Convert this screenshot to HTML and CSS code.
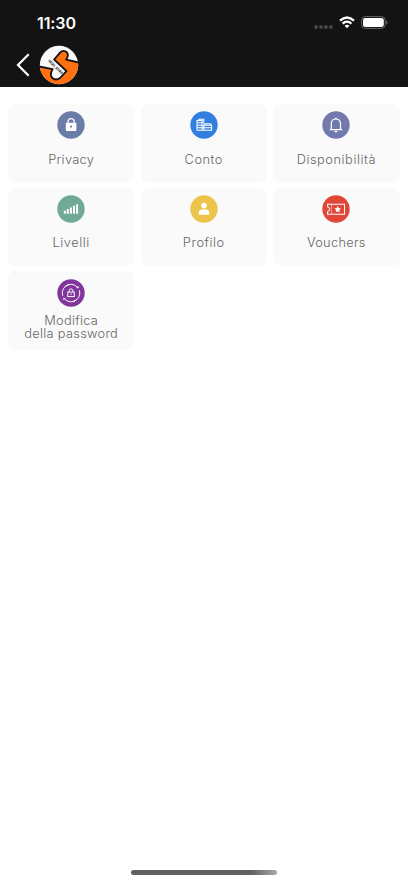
FILE: index.html
```html
<!DOCTYPE html>
<html lang="it">
<head>
<meta charset="utf-8">
<title>Impostazioni</title>
<link rel="stylesheet" href="styles.css">
</head>
<body>
<div class="screen">
  <header class="header">
    <div class="status">
      <span class="time">11:30</span>
      <div class="indicators">
        <svg class="signal" width="19" height="4" viewBox="0 0 19 4" fill="#4b4b4b"><rect x=".4" y=".3" width="3.4" height="3.4" rx="1"/><rect x="5.3" y=".3" width="3.4" height="3.4" rx="1"/><rect x="10.2" y=".3" width="3.4" height="3.4" rx="1"/><rect x="15.1" y=".3" width="3.4" height="3.4" rx="1"/></svg>
        <svg class="wifi" width="16" height="13" viewBox="0 0 16 13" fill="none" stroke="#fff" stroke-width="2.3"><path d="M1 4.7Q8-1.7 15 4.7M3.6 7.6Q8 3.6 12.4 7.6"/><path d="M5.6 9.7Q8 7.9 10.4 9.7L8 12.3Z" fill="#fff" stroke="none"/></svg>
        <svg class="battery" width="27" height="13" viewBox="0 0 27 13"><rect x=".6" y=".6" width="23.6" height="11.8" rx="3.8" fill="none" stroke="#666"/><rect x="2" y="2" width="20.8" height="9" rx="2.3" fill="#fff"/><path d="M25.2 4.3Q26.6 5 26.6 6.5T25.2 8.7Z" fill="#666"/></svg>
      </div>
    </div>
    <div class="nav">
      <svg class="back" width="14" height="24" viewBox="0 0 14 24" fill="none" stroke="#fff" stroke-width="2.2"><path d="M12.7 1.3 2 12l10.7 10.7"/></svg>
      <svg class="logo" width="40" height="40" viewBox="0 0 40 40">
        <defs><clipPath id="disc"><circle cx="20" cy="20" r="19.2"/></clipPath></defs>
        <g clip-path="url(#disc)">
          <path fill="#fafafa" d="M0 0h40v40H0z"/>
          <path fill="#ff7010" d="M0 22 13.6 24 27.5 26.2 15.1 14.5 21.3 7.3Q24.6 4.6 27.7 7.2 30.3 10 27.2 14.6L40 17.5V40H0Z"/>
          <path fill="#fafafa" d="M15.1 14.5 27.5 26.2 21 33Q17 36 13.4 33 10.2 29.8 13.6 24.2L6 22.5Z"/>
          <path fill="none" stroke="#141010" stroke-width="1.8" stroke-linejoin="round" d="M0 21.5 13.6 24.2Q10.2 29.8 13.4 33 17 36 21 33L27.5 26.2 15.1 14.5 21.3 7.3Q24.6 4.6 27.7 7.2 30.3 10 27.2 14.6L40 17.5"/>
          <text class="logo-name" transform="translate(8.8 16.2) rotate(44)" textLength="19" lengthAdjust="spacingAndGlyphs">PADEL SOMA</text>
        </g>
      </svg>
    </div>
  </header>
  <main class="grid">
    <section class="card">
      <svg class="icon" viewBox="0 0 28 28"><circle cx="14" cy="14" r="13.7" fill="#6c7ca8"/><rect x="8.8" y="11.7" width="10.6" height="8.4" rx="1" fill="#fff"/><path d="M11 12v-1.3a3.1 3.1 0 0 1 6.2 0V12" fill="none" stroke="#fff" stroke-width="1.3"/><circle cx="14.1" cy="15.6" r="1.1" fill="#6c7ca8"/></svg>
      <span class="label">Privacy</span>
    </section>
    <section class="card">
      <svg class="icon" viewBox="0 0 28 28"><circle cx="14" cy="14" r="13.7" fill="#327fe0"/><g fill="none" stroke="#fff" stroke-width="1.05"><path d="M7 9.4h5.1v9.9H7zM8.9 9.4V8.2h4.9v4.5M7 11.8h5.1M7 14.2h5.1M7 16.7h5.1M12.1 19.3h9.5v-5.1l-1.5-1.4h-4.8l-1.5 1.4h7.8M13.8 14.2v5M12.1 16.7h9.5"/></g></svg>
      <span class="label wide">Conto</span>
    </section>
    <section class="card">
      <svg class="icon" viewBox="0 0 28 28"><circle cx="14" cy="14" r="13.7" fill="#7179ad"/><path d="M7.7 18.5h12.6M9.3 18.2v-5.8a4.6 4.6 0 0 1 9.2 0v5.8M13.9 6.5v1.6" fill="none" stroke="#fff" stroke-width="1.25"/><rect x="12.4" y="19.8" width="3.1" height="1.5" rx=".7" fill="#fff"/></svg>
      <span class="label wide">Disponibilità</span>
    </section>
    <section class="card">
      <svg class="icon" viewBox="0 0 28 28"><circle cx="14" cy="14" r="13.7" fill="#70aa97"/><path d="M7.8 18.8v-3.1M10.8 18.8v-4.9M13.9 18.8v-6.4M17 18.8v-8.1M20.1 18.8V9.2" stroke="#fff" stroke-width="2"/></svg>
      <span class="label wide">Livelli</span>
    </section>
    <section class="card">
      <svg class="icon" viewBox="0 0 28 28"><circle cx="14" cy="14" r="13.7" fill="#ecc44b"/><circle cx="14" cy="10.6" r="2.8" fill="#fff"/><path d="M8.8 19.8v-2q0-3.4 3.4-3.4h3.6q3.4 0 3.4 3.4v2Z" fill="#fff"/></svg>
      <span class="label wide">Profilo</span>
    </section>
    <section class="card">
      <svg class="icon" viewBox="0 0 28 28"><circle cx="14" cy="14" r="13.7" fill="#e04737"/><path d="M5.6 9.2h16.9v10H5.6v-2.5q2-.3 2-2.5t-2-2.5Z" fill="none" stroke="#fff" stroke-width="1.05"/><path d="M9.6 9.8v9" stroke="#fff" stroke-width=".8" stroke-dasharray="1.4 1.1"/><path d="m15.7 11 1 2.1 2.3.3-1.7 1.6.4 2.3-2-1.1-2 1.1.4-2.3-1.7-1.6 2.3-.3Z" fill="#fff"/></svg>
      <span class="label">Vouchers</span>
    </section>
    <section class="card">
      <svg class="icon" viewBox="0 0 28 28"><circle cx="14" cy="14" r="13.7" fill="#81369c"/><g fill="none" stroke="#fff" stroke-width=".95"><path d="M8.1 7.6A8.7 8.7 0 0 1 20.6 8.4M22.4 11.3A8.7 8.7 0 0 1 15.4 22.6M19.7 20.8A8.7 8.7 0 0 1 7.3 19.6M5.7 16.8A8.7 8.7 0 0 1 12.1 5.5"/><rect x="10.8" y="13.1" width="6.5" height="4.5"/><path d="M12.1 13v-1.2a1.9 1.9 0 0 1 3.8 0V13M14.1 14.6v1.4"/></g><path d="m19.1 8.9 2.5.4.1-2.5ZM8.9 19.1l-2.5-.4v2.5Z" fill="#fff"/></svg>
      <span class="label password">Modifica<br>della password</span>
    </section>
  </main>
  <div class="home"></div>
</div>
</body>
</html>
```
FILE: styles.css
```css
* { box-sizing: border-box; }
body { margin: 0; background: #fff; }
svg { display: block; flex: none; }
.screen { width: 408px; height: 883px; display: flex; flex-direction: column; overflow: hidden; font-family: Inter, "Liberation Sans", sans-serif; }
.header { height: 87px; flex: none; background: #131313; }
.status { height: 45px; display: flex; justify-content: space-between; padding-left: 37px; padding-right: 20.5px; }
.time { margin-top: 13px; font-size: 16px; line-height: 20px; font-weight: 600; letter-spacing: -.1px; color: #fff; }
.indicators { display: flex; align-items: flex-start; padding-top: 16px; }
.signal { margin-top: 8.5px; }
.wifi { margin-left: 6px; }
.battery { margin-left: 6px; }
.nav { display: flex; align-items: center; padding-left: 16px; height: 40.5px; }
.logo { margin-left: 9.3px; }
.logo-name { font-size: 3.7px; font-weight: 700; fill: #222; }
.grid { flex: 1; display: grid; grid-template-columns: repeat(3, 126.4px); grid-auto-rows: 78.6px; gap: 5px 6.2px; align-content: start; padding: 17px 8px 0; }
.card { background: #fafafa; border-radius: 8px; display: flex; flex-direction: column; align-items: center; padding-top: 7.4px; }
.icon { width: 28px; height: 28px; }
.label { margin-top: 13.4px; font-size: 12.8px; line-height: 13px; font-weight: 300; letter-spacing: .3px; color: #666; text-align: center; white-space: nowrap; }
.wide { letter-spacing: .55px; }
.password { margin-top: 7px; }
.home { align-self: center; width: 146px; height: 5px; margin-bottom: 8px; flex: none; border-radius: 3px; background: linear-gradient(100deg, #606060 0 82%, #aaa); }
```
